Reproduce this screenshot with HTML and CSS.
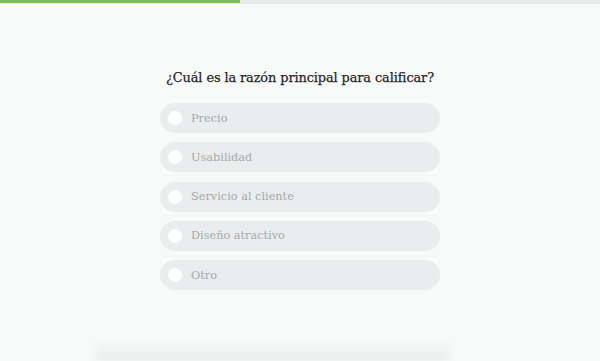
FILE: index.html
```html
<!DOCTYPE html>
<html lang="es">
<head>
<meta charset="utf-8">
<link rel="stylesheet" href="styles.css">
</head>
<body>
<div class="progress"><div class="progress-fill" style="width:240px"></div></div>
<main class="survey">
  <h1 class="question">¿Cuál es la razón principal para calificar?</h1>
  <ul class="options">
    <li class="option"><span class="radio"></span><span class="label">Precio</span></li>
    <li class="option"><span class="radio"></span><span class="label">Usabilidad</span></li>
    <li class="option"><span class="radio"></span><span class="label">Servicio al cliente</span></li>
    <li class="option"><span class="radio"></span><span class="label">Diseño atractivo</span></li>
    <li class="option"><span class="radio"></span><span class="label">Otro</span></li>
  </ul>
</main>
<div class="footer-shadow"></div>
</body>
</html>
```

FILE: styles.css
```css
html, body {
  margin: 0;
  padding: 0;
}
html {
  overflow: hidden;
}
body {
  width: 600px;
  height: 361px;
  overflow: hidden;
  background: #f8f9f9;
  font-family: "DejaVu Serif", "Liberation Serif", serif;
  position: relative;
}
.progress {
  height: 4px;
  background: #e6eaea;
}
.progress-fill {
  height: 3px;
  background: #7cbd5c;
}
.survey {
  display: flex;
  flex-direction: column;
  align-items: center;
  padding-top: 66px;
}
.question {
  margin: 0 0 17px;
  font-size: 12.9px;
  font-weight: normal;
  color: #262626;
  letter-spacing: -0.1px;
  line-height: 16px;
  -webkit-text-stroke: 0.25px #262626;
}
.options {
  list-style: none;
  margin: 0;
  padding: 0;
  display: flex;
  flex-direction: column;
  gap: 9.25px;
}
.option {
  width: 280px;
  height: 30px;
  border-radius: 15px;
  background: #eaeded;
  display: flex;
  align-items: center;
  padding-left: 8px;
  box-sizing: border-box;
}
.radio {
  width: 14px;
  height: 14px;
  border-radius: 50%;
  background: #fff;
  margin-right: 9px;
}
.label {
  font-size: 11.3px;
  color: #a4a9a9;
}
.footer-shadow {
  position: absolute;
  left: 95px;
  width: 355px;
  bottom: 0;
  height: 22px;
  background: linear-gradient(to bottom, rgba(0, 0, 0, 0), rgba(0, 0, 0, 0.06));
  filter: blur(4px);
}
```
